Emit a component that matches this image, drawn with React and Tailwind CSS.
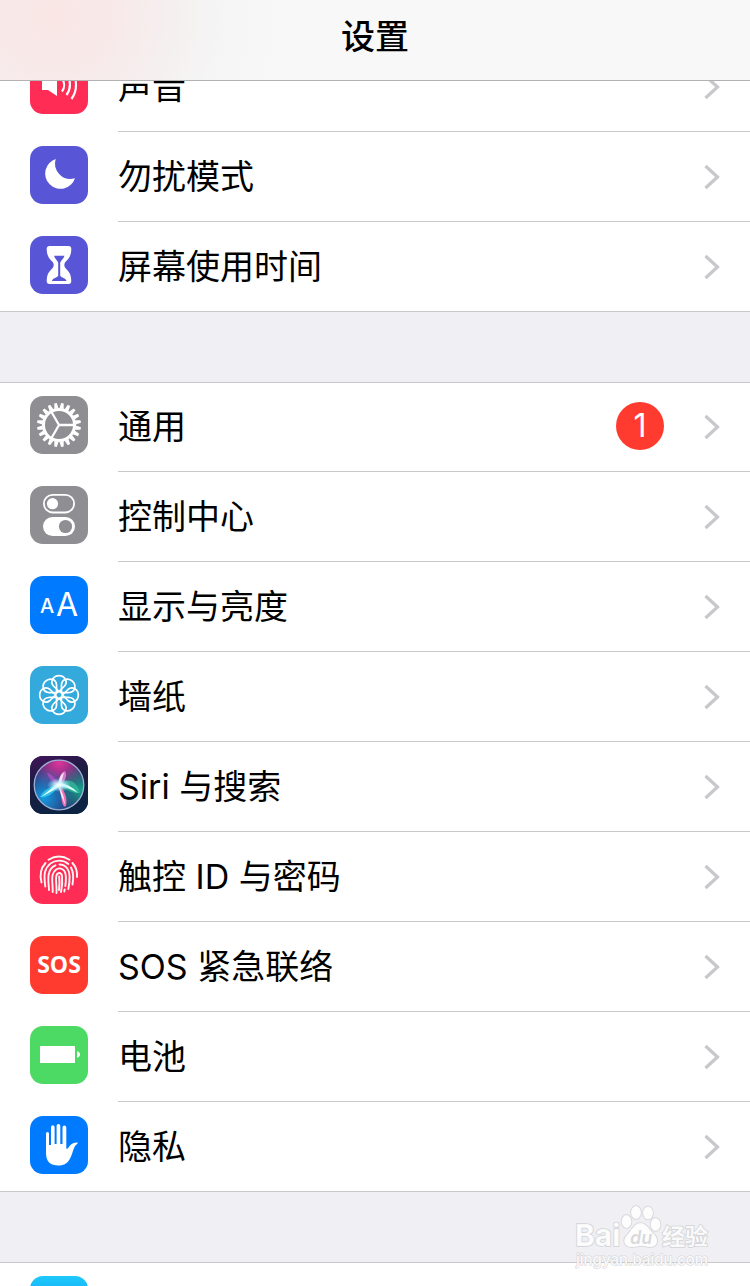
import React from "react";
import clsx from "clsx";

function SoundIcon() {
  return (
    <svg viewBox="0 0 58 58" className="h-full w-full" fill="none" stroke="white" strokeWidth="2.2" strokeLinecap="butt">
      <path d="M12 24h6l9-7v23l-9-6h-6z" fill="white" stroke="none" />
      <path d="M32 22.5a11 11 0 0 1 0 13M36.5 18.5a17 17 0 0 1 0 20.5M41.5 15a24 24 0 0 1 0 28" />
    </svg>
  );
}

function MoonIcon() {
  return (
    <svg viewBox="0 0 58 58" className="h-full w-full" fill="white">
      <path d="M25.7 13A15.3 15.3 0 1 0 45 32.3A15.5 15.5 0 0 1 25.7 13z" />
    </svg>
  );
}

function HourglassIcon() {
  return (
    <svg viewBox="0 0 58 58" className="h-full w-full">
      <path
        fill="white"
        d="M19.5 10h19q2.8 0 2.8 3c-.2 7.5-2.6 9.5-6 13q-2 3 0 6c3.4 3.5 5.8 5.5 6 13q0 3-2.8 3h-19q-2.8 0-2.8-3c.2-7.5 2.6-9.5 6-13q2-3 0-6c-3.4-3.5-5.8-5.5-6-13q0-3 2.8-3z"
      />
      <path fill="#5856d6" d="M24 19.8h10.5c-.8 3-3.5 4.5-4.3 7v13c.8 1.8 6 2.2 6.3 5.2h-14.5c.3-3 5.4-3.4 6.2-5.2v-13c-.8-2.5-3.4-4-4.200-7z" />
    </svg>
  );
}

const gearTeeth = Array.from({ length: 20 }, (_, i) => i * 18 + 9);

function GearIcon() {
  return (
    <svg viewBox="0 0 58 58" className="h-full w-full">
      <g transform="translate(29 29)">
        {gearTeeth.map((deg) => (
          <path key={deg} d="M-2.1-16.5L-1.3-22h2.6L2.1-16.5z" fill="white" transform={`rotate(${deg})`} />
        ))}
        <circle r="15.5" fill="none" stroke="white" strokeWidth="3" />
        <path d="M0 0H15M0 0L-7.5-13M0 0L-7.5 13" stroke="white" strokeWidth="2.3" />
      </g>
    </svg>
  );
}

function TogglesIcon() {
  return (
    <svg viewBox="0 0 58 58" className="h-full w-full">
      <rect x="13.9" y="8.9" width="30.2" height="17.6" rx="8.8" fill="none" stroke="white" strokeWidth="1.8" />
      <circle cx="22.5" cy="17.7" r="5.6" fill="white" />
      <rect x="13" y="31" width="32" height="19" rx="9.5" fill="white" />
      <circle cx="35.5" cy="40.5" r="6.6" fill="#8e8e93" />
    </svg>
  );
}

function TextSizeIcon() {
  return (
    <svg viewBox="0 0 58 58" className="h-full w-full font-['Inter',sans-serif]" fill="white" textAnchor="middle">
      <text x="17" y="37" fontSize="20" fontWeight="500">A</text>
      <text x="37" y="40" fontSize="32" fontWeight="400">A</text>
    </svg>
  );
}

const petals = [0, 45, 90, 135, 180, 225, 270, 315];

function FlowerIcon() {
  return (
    <svg viewBox="0 0 58 58" className="h-full w-full">
      <g transform="translate(29 29)" fill="none" stroke="white" strokeWidth="1.7">
        {petals.map((deg) => (
          <path key={deg} d="M0-3.5L-5.500-9C-9.500-13.500-5.500-19.300 0-19.300S9.500-13.500 5.500-9z" transform={`rotate(${deg})`} />
        ))}
        <circle r="3.3" />
      </g>
    </svg>
  );
}

function SiriIcon() {
  return (
    <svg viewBox="0 0 58 58" className="h-full w-full">
      <defs>
        <linearGradient id="siriBack" x1="0" y1="0" x2="0.3" y2="1">
          <stop offset="0" stopColor="#43145c" />
          <stop offset="0.45" stopColor="#1c1c40" />
          <stop offset="1" stopColor="#0d2344" />
        </linearGradient>
        <radialGradient id="siriPink" cx="0.5" cy="0.05" r="0.6">
          <stop offset="0" stopColor="#e0359c" />
          <stop offset="1" stopColor="#e0359c" stopOpacity="0" />
        </radialGradient>
        <radialGradient id="siriBlue" cx="0.2" cy="0.75" r="0.6">
          <stop offset="0" stopColor="#149be0" />
          <stop offset="1" stopColor="#149be0" stopOpacity="0" />
        </radialGradient>
        <radialGradient id="siriGreen" cx="0.95" cy="0.6" r="0.5">
          <stop offset="0" stopColor="#16a48b" />
          <stop offset="1" stopColor="#16a48b" stopOpacity="0" />
        </radialGradient>
        <radialGradient id="siriGlow" cx="0.5" cy="0.5" r="0.5">
          <stop offset="0" stopColor="white" />
          <stop offset="0.4" stopColor="#c9f7ff" stopOpacity="0.8" />
          <stop offset="1" stopColor="#8ee8ff" stopOpacity="0" />
        </radialGradient>
      </defs>
      <rect width="58" height="58" fill="url(#siriBack)" />
      <circle cx="29" cy="29" r="25" fill="#2b2a6b" />
      <circle cx="29" cy="29" r="25" fill="url(#siriPink)" />
      <circle cx="29" cy="29" r="25" fill="url(#siriBlue)" />
      <circle cx="29" cy="29" r="25" fill="url(#siriGreen)" />
      <path d="M29 29C27 24 22 18 17 17C19 23 23 28 29 30z" fill="#bc4fc7" fillOpacity="0.7" />
      <path d="M29 30C28 23 30 17 35 15C38 20 34 26 31 30z" fill="#ee8fe0" fillOpacity="0.75" />
      <path d="M30 28C37 22 46 23 50 37C44 38 37 34 30 30z" fill="#35cfa3" fillOpacity="0.6" />
      <path d="M28 28C21 30 13 34 10 41C17 43 24 36 30 30z" fill="#38cff3" fillOpacity="0.75" />
      <path d="M29 29C34 34 38 41 36 50C33 52 32 46 31 40z" fill="#f36eae" />
      <path d="M11 41Q23 31 28 27Q39 27 48 37Q37 31 30 30Q23 35 11 41z" fill="#d9fff8" />
      <path d="M28 29Q34 37 35 49Q31 40 28 29zM28 29Q29 20 34 16Q32 23 31 29z" fill="#ffe3fa" />
      <ellipse cx="29" cy="29" rx="12" ry="7" fill="url(#siriGlow)" />
      <circle cx="29" cy="29" r="24.8" fill="none" stroke="#9cafd1" strokeWidth="1.3" />
    </svg>
  );
}

function FingerprintIcon() {
  return (
    <svg viewBox="0 0 58 58" className="h-full w-full" fill="none" stroke="white" strokeOpacity="0.95" strokeWidth="1.9" strokeLinecap="round">
      <path d="M18.5 13.8C25 9.7 33 9.7 39.5 13.8" />
      <path d="M11.5 36.5C9.5 29 11 22 15.5 17M42.5 17C46 21 47.5 26 47 31" />
      <path d="M15.3 40.5C14.7 36 14 30 15 26C17.5 18 23.5 14.5 29.5 14.6C33 14.7 36 16 38.3 18" />
      <path d="M41 21.5C44 27 43.5 33 42.5 38.5" />
      <path d="M19 44C18.8 39 17.5 32 19 27C20 23 22.5 20.5 25.5 19.3M29.5 18.5C36 18.5 39.5 24 39.6 30C39.7 35 39.2 39 38.3 43" />
      <path d="M22.7 46C23 40 21.5 34 22.6 29C24 24 27.5 22 30 22.4C34 23 35.8 27 35.9 31C36 35 35.7 38 35.3 40M34.7 43.5L34.3 45.5" />
      <path d="M26.5 47C27 41 25.5 35 26.2 30.5C27 26.5 31 25.5 32 30C32.7 36 32 41 31 46" />
      <path d="M29.2 30.5C29.8 36 29.5 40 29 44" />
    </svg>
  );
}

function SosIcon() {
  return (
    <svg viewBox="0 0 58 58" className="h-full w-full font-['Open_Sans',sans-serif]" fill="white" textAnchor="middle">
      <text x="29" y="37" fontSize="23" fontWeight="700">SOS</text>
    </svg>
  );
}

function BatteryIcon() {
  return (
    <svg viewBox="0 0 58 58" className="h-full w-full" fill="white">
      <rect x="10" y="20" width="35" height="17" rx="0.5" />
      <path d="M47 25.3c4 .5 4 6 0 6.5z" />
    </svg>
  );
}

function HandIcon() {
  return (
    <svg viewBox="0 0 58 58" className="h-full w-full" fill="white">
      <path d="M16 17.5a1.5 1.5 0 0 1 3 0V29h2V11a1.8 1.8 0 0 1 3.6 0V28h2V9.8a1.8 1.8 0 0 1 3.7 0V28h2.2V11.5a1.9 1.9 0 0 1 3.8 0V32.5q1.2.5 2-.7c2-3.5 5-5.8 9-5.3q1.2.5-.5 1.7c-4 3.3-3.5 8.5-7 14.8C37 48 33 49.5 28 49.5C21 49.5 16 46 16 37z" />
    </svg>
  );
}

const soundRows = [
  { label: "声音", icon: <SoundIcon />, color: "bg-[#ff2d55]" },
  { label: "勿扰模式", icon: <MoonIcon />, color: "bg-[#5856d6]" },
  { label: "屏幕使用时间", icon: <HourglassIcon />, color: "bg-[#5856d6]" },
];

const generalRows = [
  { label: "通用", icon: <GearIcon />, color: "bg-[#8e8e93]", badge: 1 },
  { label: "控制中心", icon: <TogglesIcon />, color: "bg-[#8e8e93]" },
  { label: "显示与亮度", icon: <TextSizeIcon />, color: "bg-[#007aff]" },
  { label: "墙纸", icon: <FlowerIcon />, color: "bg-[#34aadc]" },
  { label: "Siri 与搜索", icon: <SiriIcon />, color: "bg-[#1c1c40]" },
  { label: "触控 ID 与密码", icon: <FingerprintIcon />, color: "bg-[#ff2d55]" },
  { label: "SOS 紧急联络", icon: <SosIcon />, color: "bg-[#ff3b30]" },
  { label: "电池", icon: <BatteryIcon />, color: "bg-[#4cd964]" },
  { label: "隐私", icon: <HandIcon />, color: "bg-[#007aff]" },
];

function Chevron() {
  return (
    <svg viewBox="0 0 16 26" className="h-[26px] w-4 shrink-0" fill="none" stroke="#c7c7cc" strokeWidth="3.2">
      <path d="M1.500 2L13.500 13L1.500 24" />
    </svg>
  );
}

function SettingsRow({ label, icon, color, badge }) {
  return (
    <li className="group first:-mt-px">
      <button type="button" className="flex w-full items-center gap-[30px] pl-[30px] text-left">
        <span className={clsx("mb-1 size-[58px] shrink-0 overflow-hidden rounded-[13px]", color)}>{icon}</span>
        <span className="flex h-[90px] min-w-0 flex-1 items-center gap-10 border-b border-[#c8c7cc] pr-[30px] group-last:h-[89px] group-last:border-b-0">
          <span className="flex-1 truncate text-[34px] leading-[48px]">{label}</span>
          {badge && (
            <span className="mb-0.5 flex size-12 items-center justify-center rounded-full bg-[#ff3b30] text-[32px] leading-[48px] text-white">
              {badge}
            </span>
          )}
          <Chevron />
        </span>
      </button>
    </li>
  );
}

function SettingsGroup({ rows }) {
  return (
    <ul className="border-y border-[#c8c7cc] bg-white">
      {rows.map((row) => (
        <SettingsRow key={row.label} {...row} />
      ))}
    </ul>
  );
}

function Watermark() {
  return (
    <svg
      viewBox="0 0 140 68"
      className="pointer-events-none absolute right-[35px] bottom-[14px] h-[68px] w-[140px] font-['Inter','Noto_Sans_CJK_SC',sans-serif]"
      fill="white"
      fillOpacity="0.85"
      stroke="#d3d3d7"
      strokeWidth="1.5"
      paintOrder="stroke"
    >
      <text x="0" y="42" fontSize="30" fontWeight="700">Bai</text>
      <ellipse cx="51.5" cy="17.5" rx="5" ry="6.5" />
      <ellipse cx="61" cy="8.5" rx="5" ry="6.5" />
      <ellipse cx="73" cy="9" rx="5" ry="6.5" />
      <ellipse cx="80.5" cy="20.5" rx="5" ry="6.5" />
      <path d="M65.5 19C59 19 57 26 52 31C47 36 49 43 56 43C60 43.500 62 42 66 42C70 42 73 43.500 77 43C83 42 84 35 79 30C74 26 72 19 65.500 19z" />
      <text x="55" y="40" fontSize="18" fontWeight="600" fontStyle="italic" fill="#d3d3d7" stroke="none">du</text>
      <text x="87" y="41" fontSize="23" fontWeight="700">经验</text>
      <text x="1" y="61" fontSize="15" fontWeight="500" strokeWidth="1">jingyan.baidu.com</text>
    </svg>
  );
}

export default function App() {
  return (
    <div className="relative h-screen overflow-hidden bg-[#efeff4] font-['Inter','Noto_Sans_CJK_SC',sans-serif] text-black">
      <header className="relative z-10 flex h-[81px] items-center justify-center border-b border-[#b2b2b2] bg-[#f8f8f8] bg-[radial-gradient(ellipse_30%_260%_at_7%_20%,#f9e6e5_0%,#f8eaea_30%,#f5f0f0_55%,#f5f5f5_75%,#f8f8f8_100%)] pb-1.5">
        <h1 className="text-[34px] leading-[48px] font-medium">设置</h1>
      </header>
      {/* list is scrolled, first row slides under the header */}
      <main className="-mt-[39px] flex flex-col gap-[70px]">
        <SettingsGroup rows={soundRows} />
        <SettingsGroup rows={generalRows} />
        <ul className="border-t border-[#c8c7cc] bg-white">
          <li className="-mt-px">
            <button type="button" aria-label="iTunes Store 与 App Store" className="flex h-[90px] w-full items-center pl-[30px]">
              <span className="mb-1 size-[58px] rounded-[13px] bg-linear-to-b from-[#1ec9fa] to-[#1d77f2]" />
            </button>
          </li>
        </ul>
      </main>
      <Watermark />
    </div>
  );
}
